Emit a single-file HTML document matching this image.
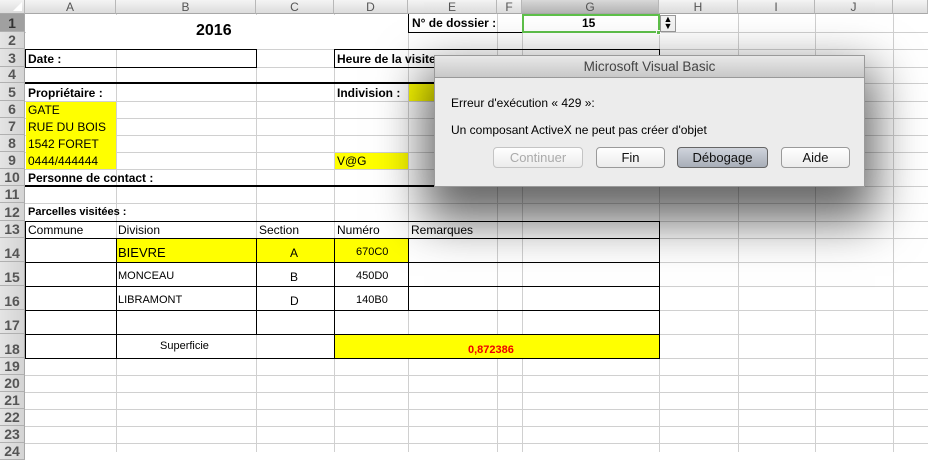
<!DOCTYPE html>
<html><head><meta charset="utf-8"><style>
*{margin:0;padding:0;box-sizing:border-box}
body{width:928px;height:452px;overflow:hidden;background:#fff;position:relative;font-family:"Liberation Sans",sans-serif;font-size:11px;color:#000}
.a{position:absolute}
.v{position:absolute;width:1px;background:#d0d0d0;top:14px;height:438px}
.h{position:absolute;height:1px;background:#d0d0d0;left:0;width:928px}
.ch{position:absolute;top:0;height:14px;background:linear-gradient(#f4f4f4,#dcdcdc);border-right:1px solid #b8b8b8;border-bottom:1px solid #a8a8a8;text-align:center;font-size:12px;line-height:14px;color:#555}
.rh{position:absolute;left:0;width:25px;background:linear-gradient(90deg,#e4e4e4,#d4d4d4);border-bottom:1px solid #b0b0b0;border-right:1px solid #a8a8a8;text-align:center;font-size:14px;color:#555;font-weight:bold;display:flex;align-items:flex-end;justify-content:center;line-height:15px}
.y{position:absolute;background:#ffff00}
.bk{position:absolute;background:#000}
.t{position:absolute;white-space:nowrap;font-size:12px}
.b{font-weight:bold}
.btn{position:absolute;top:147px;height:21px;border:1px solid #9a9a9a;border-radius:4px;background:linear-gradient(#fff,#ececec);font-size:13px;text-align:center;line-height:19px;color:#111}
</style></head><body>
<div class="v" style="left:116px"></div><div class="v" style="left:256px"></div><div class="v" style="left:334px"></div><div class="v" style="left:408px"></div><div class="v" style="left:497px"></div><div class="v" style="left:522px"></div><div class="v" style="left:659px"></div><div class="v" style="left:738px"></div><div class="v" style="left:815px"></div><div class="v" style="left:893px"></div>
<div class="h" style="top:32px"></div><div class="h" style="top:49px"></div><div class="h" style="top:67px"></div><div class="h" style="top:83px"></div><div class="h" style="top:101px"></div><div class="h" style="top:118px"></div><div class="h" style="top:135px"></div><div class="h" style="top:152px"></div><div class="h" style="top:169px"></div><div class="h" style="top:186px"></div><div class="h" style="top:203px"></div><div class="h" style="top:221px"></div><div class="h" style="top:238px"></div><div class="h" style="top:262px"></div><div class="h" style="top:286px"></div><div class="h" style="top:310px"></div><div class="h" style="top:334px"></div><div class="h" style="top:358px"></div><div class="h" style="top:375px"></div><div class="h" style="top:392px"></div><div class="h" style="top:409px"></div><div class="h" style="top:426px"></div><div class="h" style="top:443px"></div>
<div class="a" style="left:26px;top:15px;width:382px;height:34px;background:#fff"></div>
<div class="y" style="left:26px;top:102px;width:90px;height:67px"></div>
<div class="y" style="left:409px;top:84px;width:30px;height:17px"></div>
<div class="y" style="left:335px;top:153px;width:73px;height:16px"></div>
<div class="y" style="left:117px;top:239px;width:291px;height:23px"></div>
<div class="y" style="left:335px;top:335px;width:324px;height:23px"></div>
<div class="ch" style="left:0;width:25px"></div>
<div class="a" style="left:13px;top:2px;width:0;height:0;border-left:9px solid transparent;border-bottom:9px solid #fff"></div>
<div class="ch" style="left:25px;width:91px">A</div><div class="ch" style="left:116px;width:140px">B</div><div class="ch" style="left:256px;width:78px">C</div><div class="ch" style="left:334px;width:74px">D</div><div class="ch" style="left:408px;width:89px">E</div><div class="ch" style="left:497px;width:25px">F</div><div class="ch" style="left:522px;width:137px;background:linear-gradient(#d8d8d8,#b4b4b4)">G</div><div class="ch" style="left:659px;width:79px">H</div><div class="ch" style="left:738px;width:77px">I</div><div class="ch" style="left:815px;width:78px">J</div><div class="ch" style="left:893px;width:35px"></div>
<div class="rh" style="top:14px;height:18px;background:#a0a0a0;color:#333">1</div>
<div class="rh" style="top:32px;height:17px">2</div><div class="rh" style="top:49px;height:18px">3</div><div class="rh" style="top:67px;height:16px">4</div><div class="rh" style="top:83px;height:18px">5</div><div class="rh" style="top:101px;height:17px">6</div><div class="rh" style="top:118px;height:17px">7</div><div class="rh" style="top:135px;height:17px">8</div><div class="rh" style="top:152px;height:17px">9</div><div class="rh" style="top:169px;height:17px">10</div><div class="rh" style="top:186px;height:17px">11</div><div class="rh" style="top:203px;height:18px">12</div><div class="rh" style="top:221px;height:17px">13</div><div class="rh" style="top:238px;height:24px">14</div><div class="rh" style="top:262px;height:24px">15</div><div class="rh" style="top:286px;height:24px">16</div><div class="rh" style="top:310px;height:24px">17</div><div class="rh" style="top:334px;height:24px">18</div><div class="rh" style="top:358px;height:17px">19</div><div class="rh" style="top:375px;height:17px">20</div><div class="rh" style="top:392px;height:17px">21</div><div class="rh" style="top:409px;height:17px">22</div><div class="rh" style="top:426px;height:17px">23</div><div class="rh" style="top:443px;height:17px">24</div>
<div class="bk" style="left:408px;top:14px;width:1px;height:19px"></div><div class="bk" style="left:408px;top:32px;width:114px;height:1px"></div>
<div class="a" style="left:522px;top:14px;width:138px;height:19px;border:2px solid #5ec04a"></div>
<div class="a" style="left:656px;top:30px;width:5px;height:5px;background:#5ec04a;border:1px solid #fff"></div>
<div class="a" style="left:660px;top:15px;width:16px;height:17px;border:1px solid #999;background:#f4f4f4;font-size:9px;line-height:7px;text-align:center">▲<br>▼</div>
<div class="a" style="left:25px;top:49px;width:232px;height:19px;border:1px solid #000"></div>
<div class="a" style="left:334px;top:49px;width:326px;height:19px;border:1px solid #000"></div>
<div class="bk" style="left:25px;top:82px;width:634px;height:2px"></div>
<div class="bk" style="left:25px;top:185px;width:634px;height:2px"></div>
<div class="a" style="left:25px;top:221px;width:635px;height:138px;border:1px solid #000"></div>
<div class="bk" style="left:25px;top:238px;width:634px;height:1px"></div><div class="bk" style="left:25px;top:262px;width:634px;height:1px"></div><div class="bk" style="left:25px;top:286px;width:634px;height:1px"></div><div class="bk" style="left:25px;top:310px;width:634px;height:1px"></div><div class="bk" style="left:25px;top:334px;width:634px;height:1px"></div>
<div class="bk" style="left:116px;top:238px;width:1px;height:120px"></div>
<div class="bk" style="left:256px;top:238px;width:1px;height:96px"></div>
<div class="bk" style="left:334px;top:238px;width:1px;height:120px"></div>
<div class="bk" style="left:408px;top:238px;width:1px;height:72px"></div>
<div class="t b" style="left:196px;top:22px;font-size:16px">2016</div>
<div class="t b" style="left:412px;top:16px;font-size:12px">N° de dossier :</div>
<div class="t b" style="left:582px;top:16px">15</div>
<div class="t b" style="left:28px;top:52px">Date :</div>
<div class="t b" style="left:337px;top:52px">Heure de la visite</div>
<div class="t b" style="left:28px;top:86px">Propriétaire :</div>
<div class="t b" style="left:337px;top:86px">Indivision :</div>
<div class="t" style="left:28px;top:103px">GATE</div>
<div class="t" style="left:28px;top:120px">RUE DU BOIS</div>
<div class="t" style="left:28px;top:137px">1542 FORET</div>
<div class="t" style="left:28px;top:154px">0444/444444</div>
<div class="t" style="left:337px;top:154px">V@G</div>
<div class="t b" style="left:28px;top:171px">Personne de contact :</div>
<div class="t b" style="left:28px;top:206px;font-size:11px">Parcelles visitées :</div>
<div class="t" style="left:28px;top:223px">Commune</div>
<div class="t" style="left:118px;top:223px">Division</div>
<div class="t" style="left:259px;top:223px">Section</div>
<div class="t" style="left:337px;top:223px">Numéro</div>
<div class="t" style="left:411px;top:223px">Remarques</div>
<div class="t" style="left:118px;top:245px;font-size:13px">BIEVRE</div>
<div class="t" style="left:290px;top:246px">A</div>
<div class="t" style="left:356px;top:246px;font-size:11px">670C0</div>
<div class="t" style="left:118px;top:270px;font-size:11px">MONCEAU</div>
<div class="t" style="left:290px;top:270px">B</div>
<div class="t" style="left:356px;top:270px;font-size:11px">450D0</div>
<div class="t" style="left:118px;top:294px;font-size:11px">LIBRAMONT</div>
<div class="t" style="left:290px;top:294px">D</div>
<div class="t" style="left:356px;top:294px;font-size:11px">140B0</div>
<div class="t" style="left:160px;top:340px;font-size:11px">Superficie</div>
<div class="t b" style="left:468px;top:344px;font-size:11px;color:#e00">0,872386</div>
<div class="a" style="left:434px;top:55px;width:431px;height:132px;background:#ececec;border:1px solid #9a9a9a;box-shadow:0 24px 45px 10px rgba(0,0,0,0.6)">
<div class="a" style="left:0;top:0;width:429px;height:22px;background:linear-gradient(#e8e8e8,#c8c8c8);border-bottom:1px solid #999;text-align:center;font-size:13.5px;line-height:22px;color:#444">Microsoft Visual Basic</div>
<div class="t" style="left:16px;top:40px;font-size:12px">Erreur d'exécution « 429 »:</div>
<div class="t" style="left:16px;top:67px;font-size:12px">Un composant ActiveX ne peut pas créer d'objet</div>
</div>
<div class="btn" style="left:493px;width:90px;color:#aaa;border-color:#c4c4c4">Continuer</div>
<div class="btn" style="left:596px;width:69px">Fin</div>
<div class="btn" style="left:677px;width:91px;background:linear-gradient(#d0d4dc,#a8aeb8);border-color:#666">Débogage</div>
<div class="btn" style="left:781px;width:69px">Aide</div>
</body></html>
